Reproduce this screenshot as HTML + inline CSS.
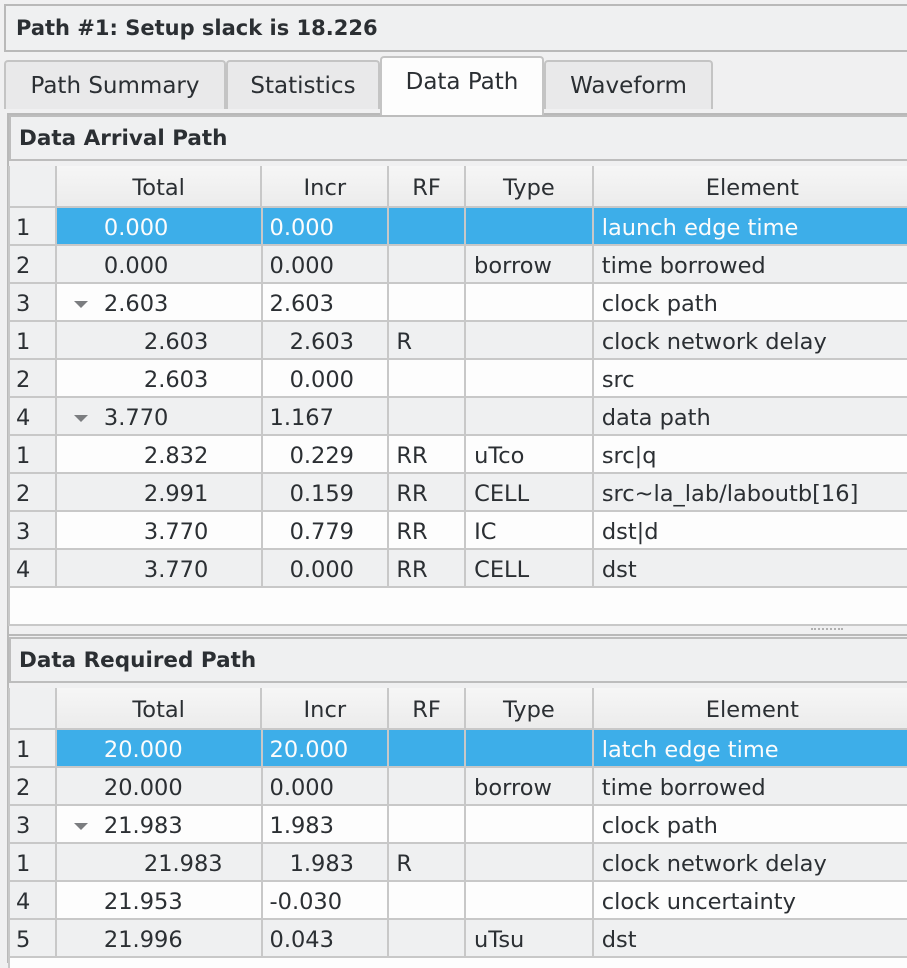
<!DOCTYPE html>
<html><head><meta charset="utf-8"><style>
*{box-sizing:border-box;margin:0;padding:0}
body{width:907px;height:958px;overflow:hidden;background:#f0f0f1;font-family:"DejaVu Sans","Liberation Sans",sans-serif;color:#2b2f33;position:relative}
.abs{position:absolute}
.title{left:4px;top:4px;width:910px;height:48px;border:2px solid #b9b9b9;border-right:none;background:#eff0f1;font-weight:bold;font-size:21px;padding:10px 0 0 10px}
.tab{top:60px;height:49px;border:2px solid #c4c4c4;border-bottom:none;border-radius:4px 4px 0 0;background:#e9e9ea;font-size:23px;text-align:center;padding-top:11px}
.panel{left:7px;top:113px;width:905px;height:850px;border:2px solid #b9b9b9;background:#f0f0f1}
.sh{left:9px;width:905px;height:46px;border:2px solid #bdbdbd;border-right:none;background:#eff0f1;font-weight:bold;font-size:21.5px;padding:9px 0 0 8px}
.tbl{left:8px;width:905px;background:#fdfdfd;border-left:2px solid #c8c8c8}
.row{display:flex;height:38px;font-size:22.5px;line-height:40px;white-space:nowrap}
.row>div{border-right:2px solid #c8c8c8;border-bottom:2px solid #c8c8c8;overflow:hidden;position:relative}
.g{background:#eff0f1}.w{background:#fdfdfd}
.hd{height:42px;background:linear-gradient(#f6f6f6,#ebebeb)}
.hd>div{text-align:center;line-height:44px}
.c0{width:47px;padding-left:6px;background:#eff0f1}
.c1{width:206px;padding-left:47px}.c1.k{padding-left:87px}
.c2{width:127px;padding-left:7px}.c2.k{padding-left:27px}
.c3{width:77px;padding-left:7px}
.c4{width:128px;padding-left:8px}
.c5{width:320px;padding-left:8px}
.hd>div{padding-left:0!important}
.sel>div:not(.c0){background:#3daee9;color:#fcfcfc}
.arr{position:absolute;left:17px;top:17px;width:0;height:0;border-left:7px solid transparent;border-right:7px solid transparent;border-top:7px solid #7b7d80}
</style></head><body>
<div class="abs title">Path #1: Setup slack is 18.226</div>
<div class="abs tab" style="left:4px;width:222px">Path Summary</div>
<div class="abs tab" style="left:226px;width:154px">Statistics</div>
<div class="abs tab" style="left:544px;width:169px">Waveform</div>
<div class="abs panel"></div>
<div class="abs tab" style="left:380px;width:164px;top:56px;height:59px;background:#fdfdfd;padding-top:11px">Data Path</div>
<div class="abs sh" style="top:115px">Data Arrival Path</div>
<div class="abs tbl" style="top:166px;height:460px;border-bottom:2px solid #c8c8c8">
<div class="row hd"><div class="c0"></div><div class="c1">Total</div><div class="c2">Incr</div><div class="c3">RF</div><div class="c4">Type</div><div class="c5">Element</div></div>
<div class="row sel"><div class="c0">1</div><div class="c1">0.000</div><div class="c2">0.000</div><div class="c3"></div><div class="c4"></div><div class="c5">launch edge time</div></div>
<div class="row g"><div class="c0">2</div><div class="c1">0.000</div><div class="c2">0.000</div><div class="c3"></div><div class="c4">borrow</div><div class="c5">time borrowed</div></div>
<div class="row w"><div class="c0">3</div><div class="c1"><span class="arr"></span>2.603</div><div class="c2">2.603</div><div class="c3"></div><div class="c4"></div><div class="c5">clock path</div></div>
<div class="row g"><div class="c0">1</div><div class="c1 k">2.603</div><div class="c2 k">2.603</div><div class="c3">R</div><div class="c4"></div><div class="c5">clock network delay</div></div>
<div class="row w"><div class="c0">2</div><div class="c1 k">2.603</div><div class="c2 k">0.000</div><div class="c3"></div><div class="c4"></div><div class="c5">src</div></div>
<div class="row g"><div class="c0">4</div><div class="c1"><span class="arr"></span>3.770</div><div class="c2">1.167</div><div class="c3"></div><div class="c4"></div><div class="c5">data path</div></div>
<div class="row w"><div class="c0">1</div><div class="c1 k">2.832</div><div class="c2 k">0.229</div><div class="c3">RR</div><div class="c4">uTco</div><div class="c5">src|q</div></div>
<div class="row g"><div class="c0">2</div><div class="c1 k">2.991</div><div class="c2 k">0.159</div><div class="c3">RR</div><div class="c4">CELL</div><div class="c5">src~la_lab/laboutb[16]</div></div>
<div class="row w"><div class="c0">3</div><div class="c1 k">3.770</div><div class="c2 k">0.779</div><div class="c3">RR</div><div class="c4">IC</div><div class="c5">dst|d</div></div>
<div class="row g"><div class="c0">4</div><div class="c1 k">3.770</div><div class="c2 k">0.000</div><div class="c3">RR</div><div class="c4">CELL</div><div class="c5">dst</div></div>
</div>
<div class="abs" style="left:811px;top:628px;width:32px;border-top:2px dotted #b0b0b0"></div>
<div class="abs" style="left:7px;top:634px;width:905px;border-top:2px solid #b9b9b9"></div>
<div class="abs sh" style="top:637px">Data Required Path</div>
<div class="abs tbl" style="top:688px;height:280px">
<div class="row hd"><div class="c0"></div><div class="c1">Total</div><div class="c2">Incr</div><div class="c3">RF</div><div class="c4">Type</div><div class="c5">Element</div></div>
<div class="row sel"><div class="c0">1</div><div class="c1">20.000</div><div class="c2">20.000</div><div class="c3"></div><div class="c4"></div><div class="c5">latch edge time</div></div>
<div class="row g"><div class="c0">2</div><div class="c1">20.000</div><div class="c2">0.000</div><div class="c3"></div><div class="c4">borrow</div><div class="c5">time borrowed</div></div>
<div class="row w"><div class="c0">3</div><div class="c1"><span class="arr"></span>21.983</div><div class="c2">1.983</div><div class="c3"></div><div class="c4"></div><div class="c5">clock path</div></div>
<div class="row g"><div class="c0">1</div><div class="c1 k">21.983</div><div class="c2 k">1.983</div><div class="c3">R</div><div class="c4"></div><div class="c5">clock network delay</div></div>
<div class="row w"><div class="c0">4</div><div class="c1">21.953</div><div class="c2">-0.030</div><div class="c3"></div><div class="c4"></div><div class="c5">clock uncertainty</div></div>
<div class="row g"><div class="c0">5</div><div class="c1">21.996</div><div class="c2">0.043</div><div class="c3"></div><div class="c4">uTsu</div><div class="c5">dst</div></div>
</div>
</body></html>
